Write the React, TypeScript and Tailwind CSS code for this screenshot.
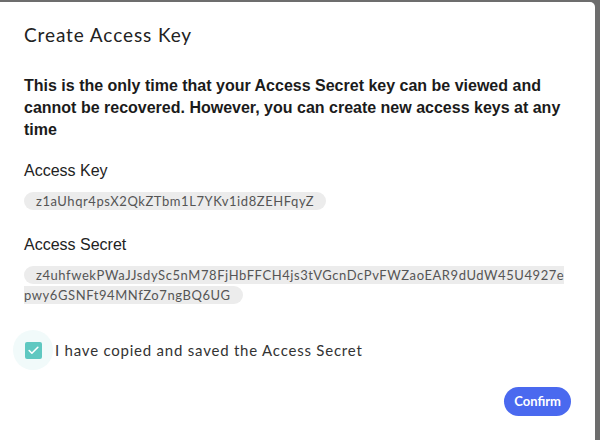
import { Check } from "lucide-react";

const ACCESS_KEY = "z1aUhqr4psX2QkZTbm1L7YKv1id8ZEHFqyZ";
const ACCESS_SECRET =
  "z4uhfwekPWaJJsdySc5nM78FjHbFFCH4js3tVGcnDcPvFWZaoEAR9dUdW45U4927epwy6GSNFt94MNfZo7ngBQ6UG";

const avenir = "font-['Lato','Noto_Sans',sans-serif]";
const helvetica = "font-['Liberation_Sans',Arial,sans-serif]";

function KeyChip({ value }: { value: string }) {
  return (
    <p className="mt-[9px] pr-[2px] text-[13px] leading-[20px] tracking-[0.57px] text-[#555] break-all">
      <span className={`${avenir} rounded-full bg-[#ececec] px-[12px] py-[1px]`}>
        {value}
      </span>
    </p>
  );
}

export default function App() {
  return (
    <div className="h-[440px] w-[600px] overflow-hidden bg-[#6d6d6d] pt-[2px]">
      <div className="flex h-[460px] w-[595px] flex-col rounded-tr-[5px] bg-white px-[24px] pt-[19px]">
        <h1 className={`${avenir} text-[19px] leading-[28px] tracking-[0.9px] text-[#222]`}>
          Create Access Key
        </h1>

        <p
          className={`${helvetica} mt-[26px] w-[540px] text-[16px] leading-[22px] font-bold text-[#1b1b1b]`}
        >
          This is the only time that your Access Secret key can be viewed and
          cannot be recovered. However, you can create new access keys at any
          time
        </p>

        <h2 className={`${helvetica} mt-[19px] text-[16px] leading-[22px] text-[#222]`}>
          Access Key
        </h2>
        <KeyChip value={ACCESS_KEY} />

        <h2 className={`${helvetica} mt-[23px] text-[16px] leading-[22px] text-[#222]`}>
          Access Secret
        </h2>
        <KeyChip value={ACCESS_SECRET} />

        <label className="mt-[25px] -ml-[11px] flex items-center gap-[2px]">
          <span className="flex h-[40px] w-[40px] items-center justify-center rounded-full bg-[#f1fafa]">
            <span className="flex h-[17px] w-[17px] items-center justify-center rounded-[2px] bg-[#5fc8c1]">
              <Check className="h-[13px] w-[13px] text-white" strokeWidth={3} />
            </span>
          </span>
          <span className={`${avenir} text-[15px] tracking-[0.78px] text-[#333]`}>
            I have copied and saved the Access Secret
          </span>
        </label>

        <div className="mt-[17px] flex justify-end">
          <button
            className={`${avenir} h-[29px] rounded-full bg-[#4a69ef] px-[10px] text-[13px] font-bold text-white`}
          >
            Confirm
          </button>
        </div>
      </div>
    </div>
  );
}
